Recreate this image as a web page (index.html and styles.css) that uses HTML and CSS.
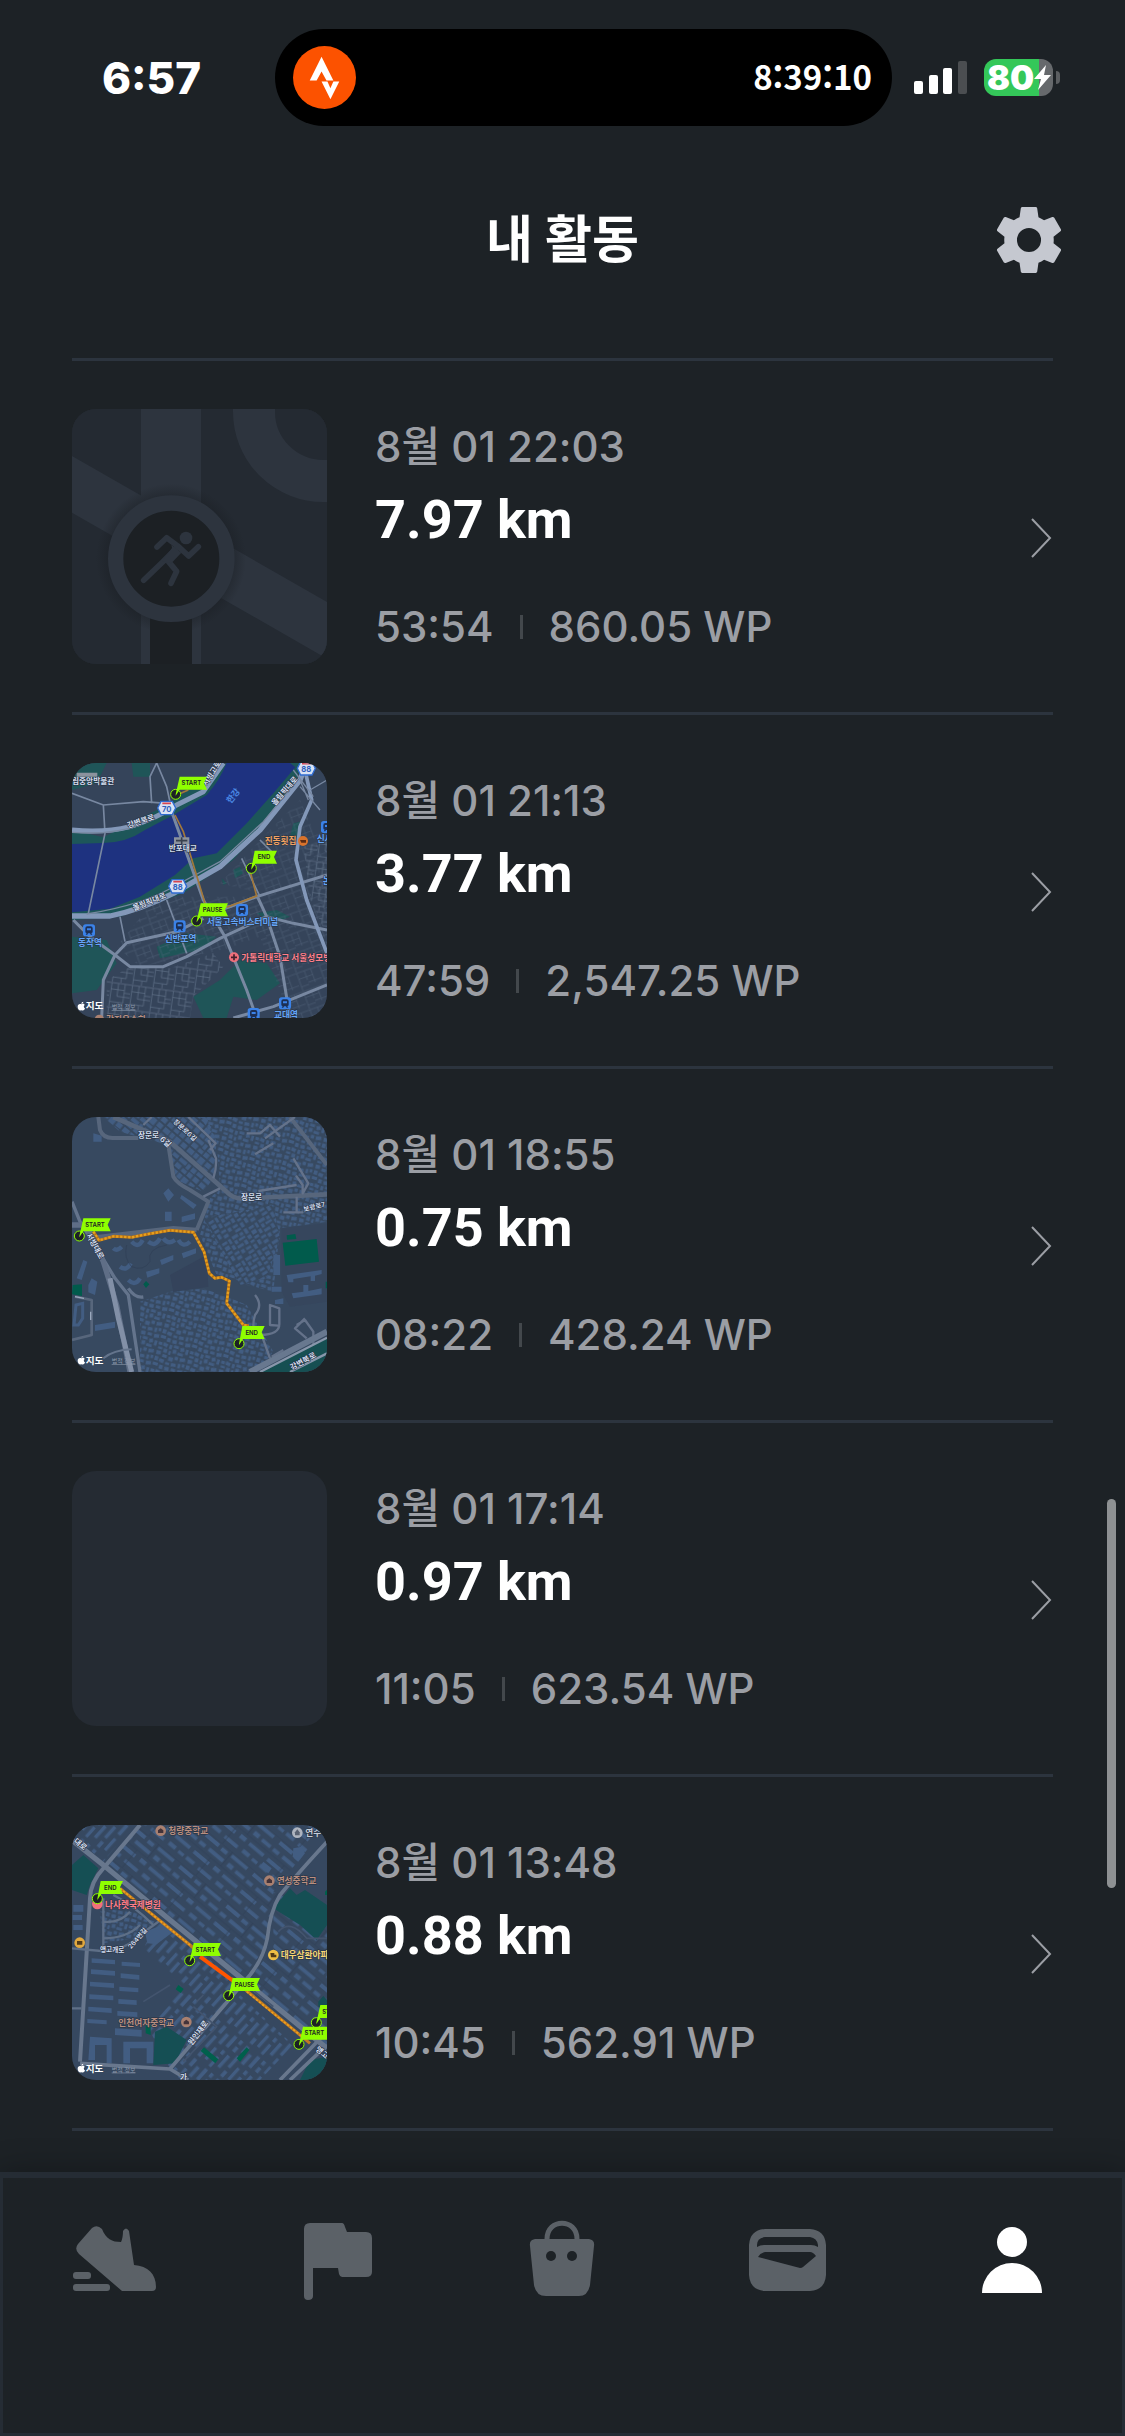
FILE: index.html
```html
<!DOCTYPE html>
<html lang="ko">
<head>
	<meta charset="UTF-8">
	<meta name="viewport" content="width=device-width, initial-scale=1">
	<title>내 활동</title>
	<link rel="stylesheet" href="styles.css">
</head>
<body>

	<!-- shared symbols for the maps -->
	<svg class="sprite" aria-hidden="true">
		<defs>
			<symbol id="flag-long" overflow="visible">
				<circle r="15" fill="#1d2125" stroke="#8fff00" stroke-width="3"/>
				<path d="M0 0L12-53H94L85-34L94-14H12L0 4Z" fill="#8fff00"/>
			</symbol>
			<symbol id="flag-short" overflow="visible">
				<circle r="15" fill="#1d2125" stroke="#8fff00" stroke-width="3"/>
				<path d="M0 0L10-53H77L68-34L77-14H12L0 4Z" fill="#8fff00"/>
			</symbol>
			<symbol id="station" overflow="visible">
				<rect x="-18" y="-18" width="36" height="36" rx="8" fill="#3b82e8"/>
				<path fill-rule="evenodd" d="M-5-12H5Q11-12 11-6V4Q11 8 7 8L10 13H5L3 9H-3L-5 13H-10L-7 8Q-11 8-11 4V-6Q-11-12-5-12ZM-6-6V0H6V-6Z" fill="#1c2f55"/>
			</symbol>
			<symbol id="shield" overflow="visible">
				<path d="M-27 0L-17-20H17L27 0L17 20H-17Z" fill="#d8e2f4" stroke="#2f6bd0" stroke-width="4"/>
				<path d="M-13-14H13" stroke="#d64550" stroke-width="5"/>
			</symbol>
			<symbol id="apple" overflow="visible">
				<path d="M0-6C4-9 9-8 10-4C6-2 7 5 11 6C9 12 6 14 0 12C-6 14-11 8-11 1C-11-6-5-9 0-6ZM0-8C0-12 3-14 6-14C6-10 3-8 0-8Z" fill="#fff"/>
			</symbol>
			<pattern id="blocks" width="98" height="84" patternUnits="userSpaceOnUse" patternTransform="rotate(17)">
				<path d="M2 3H13V12H2ZM17 1L31 4L29 14L16 11ZM36 3H44V16H36ZM49 1H64V9H49ZM69 4L80 1L83 11L72 15ZM87 3H95V19H87ZM4 17H17V24H4ZM22 19H33V31H22ZM49 14L60 13L61 25L50 26ZM65 19H82V27H65ZM2 30L16 29L17 40L4 42ZM38 22H45V33H38ZM23 36H37V45H23ZM43 38H57V50H43ZM61 32H71V43H61ZM76 33L92 30L94 40L78 44ZM3 47H14V60H3ZM19 50L33 52L31 63L17 60ZM38 56H50V64H38ZM55 55L69 53L71 62L56 65ZM76 50H84V64H76ZM88 48H96V58H88ZM2 66H18V75H2ZM23 69H34V81H23ZM39 71L52 69L54 80L41 82ZM60 70H73V78H60ZM79 70L94 67L96 77L81 81Z" fill="#425d82"/>
			</pattern>
			<pattern id="blocks-b" width="94" height="76" patternUnits="userSpaceOnUse" patternTransform="rotate(-32)">
				<path d="M2 3H19V11H2ZM24 2H32V18H24ZM38 1H58V10H38ZM63 4H74V13H63ZM80 1H90V17H80ZM3 17H18V29H3ZM38 15H48V27H38ZM53 17H74V24H53ZM23 24H33V38H23ZM2 35H17V43H2ZM38 33H58V42H38ZM63 30H73V44H63ZM79 23H91V34H79ZM79 41H92V48H79ZM3 50H13V65H3ZM19 46H35V54H19ZM40 49H51V61H40ZM57 51H73V59H57ZM19 61H34V71H19ZM57 65H75V73H57ZM80 55H90V70H80Z" fill="#425d82"/>
			</pattern>
			<pattern id="houses" width="94" height="78" patternUnits="userSpaceOnUse" patternTransform="rotate(40)">
				<path d="M3 3H24V19H3ZM28 3H42V19H28ZM46 3H66V23H46ZM72 3H90V18H72ZM3 25H19V37H3ZM23 25H41V37H23ZM47 28H67V37H47ZM73 22H90V37H73ZM3 43H29V55H3ZM33 43H44V59H33ZM50 43H66V57H50ZM71 43H91V54H71ZM3 61H22V75H3ZM28 64H45V75H28ZM50 61H66V75H50ZM72 60H90V75H72Z" fill="#425d82"/>
			</pattern>
			<pattern id="slabs" width="184" height="124" patternUnits="userSpaceOnUse" patternTransform="rotate(40)">
				<path d="M6 6H56V18H6ZM68 8H90V20H68ZM105 5H166V16H105ZM4 34H26V46H4ZM40 33H96V45H40ZM112 31H132V45H112ZM144 34H177V45H144ZM10 68H68V80H10ZM86 65H108V78H86ZM122 67H178V78H122ZM4 96H34V108H4ZM52 98H102V109H52ZM120 95H146V108H120ZM158 98H178V108H158Z" fill="#425d82"/>
				<path d="M0 56H184M0 0H184M100 0V56M60 56V124" stroke="#2e3e57" stroke-width="2"/>
			</pattern>
			<pattern id="slabs-up" width="132" height="92" patternUnits="userSpaceOnUse" patternTransform="rotate(-48)">
				<path d="M4 5H42V15H4ZM54 6H68V16H54ZM82 4H124V15H82ZM20 27H66V37H20ZM84 28H102V39H84ZM112 27H126V37H112ZM5 51H26V62H5ZM40 50H84V60H40ZM98 51H125V62H98ZM12 74H58V84H12ZM74 73H112V84H74Z" fill="#425d82"/>
			</pattern>
			<pattern id="streets" width="62" height="74" patternUnits="userSpaceOnUse" patternTransform="rotate(8)">
				<path d="M0 3H62M4 3V74M24 3V42M4 22H44M44 3V60M24 42H62M4 60H44M30 60V74M44 30H62" stroke="#617189" stroke-width="2" fill="none"/>
			</pattern>
			<pattern id="streets-b" width="72" height="58" patternUnits="userSpaceOnUse" patternTransform="rotate(-20)">
				<path d="M0 3H72M6 3V58M30 3V32M6 22H50M50 3V46M30 40H72M6 46H30" stroke="#586981" stroke-width="2" fill="none"/>
			</pattern>
		</defs>
	</svg>

	<div class="status-bar">
		<span class="clock">6:57</span>
		<div class="island">
			<svg class="island-logo" viewBox="0 0 64 64" aria-hidden="true">
				<circle cx="32" cy="32" r="32" fill="#fc5200"/>
				<path d="M29 11L41 35H34L29 26L24 35H17Z" fill="#fff"/>
				<path d="M29 36H35L38 43L41 36H47L38 54Z" fill="#fff"/>
			</svg>
			<span class="timer">8:39:10</span>
		</div>
		<svg class="signal" viewBox="0 0 53 33" aria-hidden="true">
			<rect x="0" y="20" width="9" height="13" rx="2" fill="#fff"/>
			<rect x="15" y="14" width="9" height="19" rx="2" fill="#fff"/>
			<rect x="29" y="7" width="9" height="26" rx="2" fill="#fff"/>
			<rect x="44" y="0" width="9" height="33" rx="2" fill="#4b4e51"/>
		</svg>
		<div class="battery">
			<span>80</span>
			<svg class="bolt" viewBox="0 0 17 25" aria-hidden="true"><path d="M12 0L0 14H7L4 25L17 10H10Z" fill="#fff"/></svg>
		</div>
	</div>

	<header class="header">
		<h1 class="title">내 활동</h1>
		<button class="settings" type="button" aria-label="설정">
			<svg viewBox="2 2 20 20"><path fill="#c5c8d0" d="M19.430 12.980c.04-.32.070-.64.070-.98s-.03-.66-.070-.98l2.110-1.650c.19-.15.240-.42.120-.64l-2-3.460c-.12-.22-.39-.3-.61-.22l-2.490 1c-.52-.4-1.080-.73-1.690-.98l-.38-2.650C14.460 2.180 14.250 2 14 2h-4c-.25 0-.46.180-.49.420l-.38 2.650c-.61.250-1.170.590-1.690.980l-2.490-1c-.23-.09-.49 0-.61.220l-2 3.460c-.13.220-.07.490.12.640l2.110 1.650c-.04.320-.07.650-.07.980s.03.660.070.980l-2.110 1.650c-.19.150-.24.420-.12.640l2 3.460c.12.220.39.300.61.220l2.490-1c.52.400 1.080.730 1.690.980l.38 2.650c.03.240.24.420.49.420h4c.25 0 .46-.18.490-.42l.38-2.650c.61-.25 1.170-.59 1.690-.98l2.490 1c.23.090.49 0 .61-.22l2-3.460c.12-.22.070-.49-.12-.64l-2.110-1.650zM12 15.650a3.650 3.650 0 1 1 0-7.300a3.650 3.650 0 0 1 0 7.300z"/></svg>
		</button>
	</header>

	<main class="content">
		<ul class="activities">
			<li>
				<a class="activity" href="#">
					<svg class="thumb" viewBox="36 27 765 765" aria-hidden="true">
						<defs><radialGradient id="ring-shadow"><stop offset=".8" stop-color="#191d22"/><stop offset="1" stop-color="#191d22" stop-opacity="0"/></radialGradient></defs>
						<rect x="36" y="27" width="765" height="765" fill="#242a32"/>
						<path d="M243 27H423V792H243ZM36 168L801 606V776L36 338Z" fill="#2d343e"/>
						<circle cx="790" cy="35" r="208" fill="none" stroke="#2d343e" stroke-width="126"/>
						<circle cx="333" cy="476" r="225" fill="url(#ring-shadow)" opacity=".5"/>
						<path d="M270 630H396V792H270Z" fill="#1c2024"/>
						<circle cx="334" cy="476" r="167" fill="#1c2024" stroke="#2d343e" stroke-width="46"/>
						<circle cx="378" cy="414" r="19" fill="#2d343e"/>
						<path d="M291 441L320 413L352 437L386 468L415 440M352 442L308 486L251 541M325 484L350 514L333 550" fill="none" stroke="#2d343e" stroke-width="17" stroke-linecap="round" stroke-linejoin="round"/>
						<path d="M334 434L364 458L334 490L306 484L336 444Z" fill="#2d343e"/>
					</svg>
					<div class="info">
						<span class="date">8월 01 22:03</span>
						<strong class="distance">7.97 km</strong>
						<div class="meta"><span>53:54</span><i class="sep"></i><span>860.05 WP</span></div>
					</div>
					<svg class="chevron" viewBox="0 -1 22 40" aria-hidden="true"><path d="M1 1L19 20L1 39"/></svg>
				</a>
			</li>
			<li>
				<a class="activity" href="#">
					<svg class="thumb" viewBox="36 39 765 765" aria-hidden="true">
						<rect x="36" y="39" width="765" height="765" fill="#35445a"/>
						<!-- parks -->
						<path d="M36 39H140L110 100L36 120ZM215 39H270V80H220ZM36 560L140 570L170 640L110 720L36 730ZM290 590L380 550L470 560L420 600L300 625ZM400 740L480 690L540 630L620 640L660 700L590 750L520 740L500 804H430ZM590 490L650 480L690 500L640 520ZM485 385L500 400L490 405ZM520 360L540 350L550 370L525 385ZM700 220L720 215L715 280L690 260Z" fill="#1f5558"/>
						<path d="M36 240L130 262L330 160L470 60L500 39H725L700 120L520 330L370 430L180 500L36 510Z" fill="#1d5659"/>
						<!-- river -->
						<path d="M36 282L130 279Q200 278 255 240L340 195L440 135Q480 90 500 39H690L706 52L640 130L560 220L470 310L400 325L345 375L240 440L150 476L36 487Z" fill="#1e3280"/>
						<path d="M290 440L580 440L720 390L801 380V804H690L600 560L490 600L240 650L170 590Z" fill="url(#streets-b)" opacity=".6"/>
						<path d="M210 650L330 655L460 610L490 650L400 740L390 804H140V690Z" fill="url(#streets)"/>
						<path d="M480 400L600 270L720 150L760 240L801 260V390L600 430Z" fill="url(#streets-b)" opacity=".5"/>
						<path d="M730 290L801 270V560L750 440Z" fill="url(#streets)"/>
						<g fill="none" stroke="#7888a1" stroke-linejoin="round">
							<path d="M36 130L130 165L250 155L320 160M130 165L135 250L85 490M275 160L270 80L290 39M290 39L320 110L335 180M180 500L195 575M320 450L380 610M545 325L600 440M600 270L640 310M585 440L490 480" stroke-width="5"/>
							<path d="M335 185L430 450L495 560L560 720L590 804M590 435L620 500L660 620L690 804M430 470L510 470L590 440L801 375M40 510L90 560L165 615L210 650L310 650L380 620L480 565L620 500L700 520L801 540M165 615L130 690L125 804M165 615L200 578L350 545L430 505M520 804L640 770L801 705" stroke-width="9"/>
							<path d="M36 240Q130 250 210 230Q290 205 350 165L430 125L490 39" stroke="#8398b9" stroke-width="15"/>
							<path d="M36 498H150Q240 480 340 430L480 350L600 240L720 90L740 39" stroke="#8398b9" stroke-width="16"/>
							<path d="M735 60L755 150L720 230L708 330L740 450L801 610" stroke="#8398b9" stroke-width="11"/>
							<path d="M36 247Q150 256 240 226M80 492Q250 465 350 405L480 335L610 215L705 100M700 60L760 140M720 110L780 180M801 90L750 120M745 150L720 90" stroke-width="4"/>
						</g>
						<path d="M345 195L370 245L435 460M500 472L590 438L572 370M352 134L385 120" fill="none" stroke="#a2783a" stroke-width="5"/>
						<g class="map-label road">
							<text x="205" y="235" transform="rotate(-19 205 235)">강변북로</text>
							<text x="440" y="110" transform="rotate(-58 440 110)">서빙고로</text>
							<text x="222" y="482" transform="rotate(-22 222 482)">올림픽대로</text>
							<text x="645" y="168" transform="rotate(-49 645 168)">올림픽대로</text>
							<text x="326" y="304">반포대교</text>
							<text x="36" y="102">립중앙박물관</text>
						</g>
						<path d="M342 262H388V282H342ZM50 68H112V80H50Z" fill="#8b929d"/>
						<path d="M348 272H382M365 262V282" stroke="#39414e" stroke-width="5"/>
						<text class="map-label water" x="512" y="162" transform="rotate(-52 512 162)">한강</text>
						<use href="#shield" x="320" y="174"/><use href="#shield" x="353" y="409"/><use href="#shield" x="739" y="55"/>
						<g class="shield-no"><text x="320" y="186">70</text><text x="353" y="419">88</text><text x="739" y="65">88</text></g>
						<use href="#station" x="87" y="541"/><use href="#station" x="359" y="529"/><use href="#station" x="546" y="480"/><use href="#station" x="675" y="760"/><use href="#station" x="581" y="792"/><use href="#station" x="801" y="231"/>
						<g class="map-label transit">
							<text x="54" y="588">동작역</text><text x="314" y="575">신반포역</text>
							<text x="440" y="526">서울고속버스터미널</text><text x="642" y="804">교대역</text>
							<text x="770" y="276">신사</text><text x="788" y="403">논</text>
						</g>
						<text class="map-label food" x="614" y="282">진동횟집</text>
						<circle cx="729" cy="273" r="15" fill="#d9732c"/><path d="M720 270H738V278H724Z" fill="#5b2c14"/>
						<circle cx="522" cy="622" r="15" fill="#f0707c"/><path d="M522 613V631M513 622H531" stroke="#43202c" stroke-width="5"/>
						<text class="map-label hospital" x="544" y="632">가톨릭대학교 서울성모병</text>
						<circle cx="118" cy="808" r="14" fill="#a98070"/>
						<text class="map-label school" x="138" y="818">강진우수회</text>
						<use href="#flag-long" x="347" y="133"/><use href="#flag-short" x="574" y="355"/><use href="#flag-long" x="410" y="513"/>
						<g class="flag-text"><text x="394" y="105">START</text><text x="612" y="327">END</text><text x="458" y="486">PAUSE</text></g>
						<use href="#apple" x="64" y="769"/>
						<text class="map-brand" x="77" y="778">지도</text><text class="map-legal" x="155" y="778">법적 정보</text>
					</svg>
					<div class="info">
						<span class="date">8월 01 21:13</span>
						<strong class="distance">3.77 km</strong>
						<div class="meta"><span>47:59</span><i class="sep"></i><span>2,547.25 WP</span></div>
					</div>
					<svg class="chevron" viewBox="0 -1 22 40" aria-hidden="true"><path d="M1 1L19 20L1 39"/></svg>
				</a>
			</li>
			<li>
				<a class="activity" href="#">
					<svg class="thumb" viewBox="36 36 765 765" aria-hidden="true">
						<rect x="36" y="36" width="765" height="765" fill="#374960"/>
						<path d="M130 36H440L470 110L460 220L430 260L350 225L325 120L180 80Z" fill="url(#houses)"/>
						<path d="M420 36H801V350L660 370L640 560L560 540L520 520L470 510L420 390L450 280L480 250L470 110Z" fill="url(#blocks)"/>
						<path d="M240 590L330 560L440 550L560 600L640 740L590 801H240Z" fill="url(#blocks)"/>
						<path d="M430 340L640 300L660 400L620 520L540 540Z" fill="#374960"/>
						<path d="M430 340L640 300L660 400L620 520L540 540Z" fill="url(#blocks-b)"/>
						<path d="M310 265L325 250L342 270L325 290ZM315 320H335V348H315ZM365 270L410 300L400 312L360 280ZM365 335L405 325V342L365 352ZM300 465L340 450V465L305 480ZM365 445L408 430V445L370 460ZM258 500L298 490V505L262 518ZM100 85L125 92V110H100ZM85 540L95 520L112 530L105 570L85 562ZM50 520L70 465L82 470L65 525ZM105 660L165 650V668L105 678ZM640 450H660V510H640ZM635 545H665V560H635ZM645 585L670 580V597H645Z" fill="#425d82"/>
						<path d="M160 430Q170 440 185 425M215 410Q235 432 248 405M265 410Q285 428 300 400M310 400Q325 420 345 405M355 405Q370 430 390 410M180 485Q200 500 212 475M205 525Q225 545 240 520" fill="none" stroke="#425d82" stroke-width="13"/>
						<path d="M200 420Q190 460 215 485Q250 500 270 470Q260 430 320 420" fill="none" stroke="#304056" stroke-width="2"/>
						<path d="M330 510L440 450L445 545L340 560Z" fill="#34435b"/>
						<path d="M665 370L801 355V590L690 605L665 560Z" fill="#35455c" opacity=".6"/>
						<path d="M668 413L770 402L777 470L676 482ZM680 391L706 387L709 402L681 404ZM38 540L66 538V573L36 568ZM250 538L258 528L268 538L258 549ZM797 530H801V550H797Z" fill="#015b4c"/>
						<path d="M680 510L785 495V507L765 512V528H752V514L700 522V532H685ZM695 565L730 560V540H745V558L785 550V568L700 580Z" fill="#425d82"/>
						<g fill="none" stroke="#57667c" stroke-linejoin="round">
							<path d="M160 36L330 110L500 260Q520 285 560 280L801 268" stroke-width="14"/>
							<path d="M115 36L120 75Q130 100 160 99H235M325 120L340 215Q350 235 390 255L445 290L410 375M690 36L801 180" stroke-width="12"/>
							<path d="M105 398L340 370L410 375" stroke-width="14"/>
							<path d="M385 36L467 115L450 135M445 105L468 160Q470 190 460 220M250 60L275 36M430 275L480 250M560 85H600L630 60L660 95M585 148L640 115M615 100L705 36M700 160L745 235L728 265V240L708 212M595 258L710 240M670 322H730M710 275V320M585 570Q610 600 585 630Q570 680 600 690Q660 690 658 655V610L630 600V660L655 662M710 660L735 645L760 680V740M605 690L630 760M735 640L705 670L740 700M635 755L670 735" stroke="#64728a" stroke-width="7"/>
							<path d="M36 290L60 350L110 430L165 520L205 570L240 801M205 550Q225 580 250 576" stroke="#64748c" stroke-width="10"/>
							<path d="M36 360H80L130 470L170 600L210 801" stroke="#5f6e86" stroke-width="16"/>
							<path d="M150 520L175 640L215 801" stroke="#8290a7" stroke-width="15"/>
							<path d="M36 705L95 690V585L45 575" stroke="#57667c" stroke-width="8"/>
							<path d="M130 760Q160 735 215 733" stroke="#64748c" stroke-width="6"/>
						</g>
						<path d="M48 600L68 595V640L55 660H42Z" fill="none" stroke="#425d82" stroke-width="9"/>
						<path d="M45 575L72 580M92 620V645" stroke="#9aa8bd" stroke-width="4"/>
						<path d="M600 801L801 700V801Z" fill="#164f52"/>
						<path d="M570 801L801 680" stroke="#68788f" stroke-width="18"/>
						<path d="M600 801L801 698M690 801L801 745" stroke="#8896ab" stroke-width="7"/>
						<path d="M100 380L117 406L160 394L215 397L270 386L330 376L400 382L432 440L448 505L465 520L485 517L508 528L500 595L550 660L566 662" fill="none" stroke="#b97519" stroke-width="9" stroke-linejoin="round"/>
						<path d="M100 380L117 406L160 394L215 397L270 386L330 376L400 382L432 440L448 505L465 520L485 517L508 528L500 595L550 660L566 662" fill="none" stroke="#e8a01c" stroke-width="7" stroke-dasharray="7 5"/>
						<g class="map-label road">
							<text x="234" y="99">장문로</text><text x="298" y="104" transform="rotate(42 298 104)">6길</text>
							<text class="small" x="338" y="52" transform="rotate(42 338 52)">장문로6길</text>
							<text x="543" y="286">장문로</text>
							<text class="small" x="732" y="320" transform="rotate(-14 732 320)">보광로7</text>
							<text x="78" y="390" transform="rotate(61 78 390)">서빙대로</text>
							<text x="696" y="796" transform="rotate(-29 696 796)">강변북로</text>
						</g>
						<use href="#flag-long" x="58" y="393"/><use href="#flag-short" x="537" y="716"/>
						<g class="flag-text"><text x="105" y="365">START</text><text x="575" y="689">END</text></g>
						<use href="#apple" x="64" y="766"/>
						<text class="map-brand" x="77" y="776">지도</text><text class="map-legal" x="155" y="775">법적 정보</text>
					</svg>
					<div class="info">
						<span class="date">8월 01 18:55</span>
						<strong class="distance">0.75 km</strong>
						<div class="meta"><span>08:22</span><i class="sep"></i><span>428.24 WP</span></div>
					</div>
					<svg class="chevron" viewBox="0 -1 22 40" aria-hidden="true"><path d="M1 1L19 20L1 39"/></svg>
				</a>
			</li>
			<li>
				<a class="activity" href="#">
					<div class="thumb"></div>
					<div class="info">
						<span class="date">8월 01 17:14</span>
						<strong class="distance">0.97 km</strong>
						<div class="meta"><span>11:05</span><i class="sep"></i><span>623.54 WP</span></div>
					</div>
					<svg class="chevron" viewBox="0 -1 22 40" aria-hidden="true"><path d="M1 1L19 20L1 39"/></svg>
				</a>
			</li>
			<li>
				<a class="activity" href="#">
					<svg class="thumb" viewBox="36 30 765 765" aria-hidden="true">
						<rect x="36" y="30" width="765" height="765" fill="#364860"/>
						<path d="M240 30H801L640 230L620 390L560 490L140 160Z" fill="url(#slabs)"/>
						<path d="M560 500L640 400V230L801 260V700Z" fill="url(#slabs)"/>
						<path d="M300 310L540 510L330 760L260 630L370 520L250 400Z" fill="url(#slabs-up)"/>
						<path d="M540 540L700 690L600 795H360L340 760Z" fill="url(#slabs-up)"/>
						<path d="M60 30H220L130 140L50 70Z" fill="url(#slabs-up)"/>
						<path d="M40 270H70V290H40ZM38 300H66V315H38ZM40 330H68V345H40ZM95 430L165 435V448L95 443ZM93 463L165 468V482L93 477ZM90 500L162 505V519L90 514ZM88 538L160 542V556L88 552ZM85 575L155 580V594L85 589ZM185 440L240 444V456L185 452ZM182 475L238 480V494L182 489ZM178 515L235 519V532L178 528ZM175 552L230 556V570L175 566ZM172 588L232 592V606L172 602ZM82 612L140 616V628L82 624ZM165 640L245 645V665L165 660Z" fill="#425d82"/>
						<path d="M90 665L155 670V745H140V690H105V735H85ZM190 680H280V745H260V700H210V745H190ZM700 100L725 95L735 115L715 140L698 125ZM610 140L635 160L625 175L600 155ZM255 350L320 325L340 350L290 388L262 385Z" fill="#425d82"/>
						<path d="M120 290L200 280L285 320L230 370L130 385Z" fill="url(#blocks)"/>
						<path d="M70 120L115 160L90 210L80 240L36 225V150ZM640 280L690 220L710 240L735 225L801 270V330L770 375L720 330ZM285 650L320 635L380 675L345 745L280 750ZM720 795L750 735L801 725V795ZM775 560L790 543L801 555V575H775Z" fill="#154f54"/>
						<path d="M257 630H272V660L257 655ZM355 510L371 522L362 534L347 523ZM422 708L432 697L475 733L466 745ZM530 730L560 697L568 705L540 740ZM795 230L801 224V240H795Z" fill="#00604c"/>
						<g fill="none" stroke="#68778d" stroke-linejoin="round">
							<path d="M36 75L130 150L330 315L801 700" stroke-width="16"/>
							<path d="M240 30L130 160Q92 200 90 250L60 740" stroke-width="12"/>
							<path d="M801 80Q700 190 660 240Q630 290 622 370Q610 430 570 480L330 762L385 795M60 745L330 762M660 795L801 650M690 795L801 690" stroke-width="11"/>
							<path d="M36 580H65M36 400L125 408Q200 405 240 360L298 318M130 250V400M130 320Q180 325 210 290M130 370Q200 370 240 330M160 240Q220 270 280 330" stroke="#5e6f87" stroke-width="7"/>
							<path d="M655 350Q690 310 740 370L801 370M410 560L430 540M250 560L330 510M400 575L470 635L370 740M560 510L640 575" stroke="#43546e" stroke-width="5"/>
						</g>
						<path d="M180 220L390 390L430 425M515 490L750 685" fill="none" stroke="#bf7a22" stroke-width="9"/>
						<path d="M180 220L390 390M560 530L730 668" fill="none" stroke="#f0a01c" stroke-width="5" stroke-dasharray="7 5"/>
						<path d="M420 425L520 498" stroke="#ff5500" stroke-width="12"/>
						<g class="map-label road">
							<text x="40" y="80" transform="rotate(40 40 80)">대로</text>
							<text class="small" x="120" y="410">앵고개로</text>
							<text class="small" x="213" y="403" transform="rotate(-49 213 403)">264번길</text>
							<text x="395" y="692" transform="rotate(-53 395 692)">원인재로</text>
							<text x="765" y="705" transform="rotate(40 765 705)">앵고</text><text x="360" y="795">가</text>
						</g>
						<g fill="#a98070"><circle cx="302" cy="47" r="16"/><circle cx="628" cy="197" r="16"/><circle cx="379" cy="621" r="16"/></g>
						<path d="M294 54V46L302 40L310 46V54ZM620 204V196L628 190L636 196V204ZM371 628V620L379 614L387 620V628Z" fill="#43333a"/>
						<circle cx="712" cy="53" r="16" fill="#aeb4bf"/><path d="M705 61V52L712 43L719 52V61Z" fill="#596272"/>
						<circle cx="59" cy="383" r="16" fill="#e1a83e"/><circle cx="640" cy="420" r="16" fill="#f0bf45"/>
						<path d="M51 378H67V389H51ZM631 414H643V419H649V427H633Z" fill="#523b18"/>
						<circle cx="112" cy="267" r="16" fill="#f0707c"/>
						<g class="map-label school"><text x="325" y="58">청량중학교</text><text x="650" y="207">연성중학교</text><text x="175" y="632">인천여자중학교</text></g>
						<text class="map-label plain" x="736" y="63">연수</text>
						<text class="map-label hospital" x="135" y="279">나사렛국제병원</text>
						<text class="map-label shop" x="662" y="430">대우삼환아파</text>
						<use href="#flag-short" x="112" y="251"/><use href="#flag-long" x="389" y="437"/><use href="#flag-long" x="506" y="542"/><use href="#flag-long" x="769" y="623"/><use href="#flag-long" x="717" y="688"/>
						<g class="flag-text"><text x="151" y="224">END</text><text x="436" y="411">START</text><text x="554" y="515">PAUSE</text><text x="816" y="597">START</text><text x="763" y="660">START</text></g>
						<use href="#apple" x="64" y="760"/>
						<text class="map-brand" x="77" y="770">지도</text><text class="map-legal" x="155" y="770">법적 정보</text>
					</svg>
					<div class="info">
						<span class="date">8월 01 13:48</span>
						<strong class="distance">0.88 km</strong>
						<div class="meta"><span>10:45</span><i class="sep"></i><span>562.91 WP</span></div>
					</div>
					<svg class="chevron" viewBox="0 -1 22 40" aria-hidden="true"><path d="M1 1L19 20L1 39"/></svg>
				</a>
			</li>
		</ul>
		<div class="scroll-thumb"></div>
	</main>

	<nav class="tab-bar">
		<a href="#" aria-label="운동">
			<svg viewBox="0 0 90 90"><path d="M10 30L24 14Q29 10 34 15C38 25 44 28 53 28Q55 24 55 17Q58 12 61 17L66 51C80 52 88 60 88 73Q88 77 84 77H54L11 40Q6 35 10 30Z"/><rect x="5" y="58" width="18" height="7" rx="3"/><rect x="5" y="70" width="37" height="7" rx="3"/></svg>
		</a>
		<a href="#" aria-label="챌린지">
			<svg viewBox="0 0 90 90"><path d="M11 15Q11 9 17 9H49Q51 9 52 13L54 18H73Q79 18 79 24V58Q79 63 73 63H49Q47 63 46 60L45 54H20V82Q20 86 15 86Q11 86 11 82Z"/></svg>
		</a>
		<a href="#" aria-label="상점">
			<svg viewBox="0 0 90 90"><path d="M29 28V25C29 4 59 4 59 25V28" fill="none" stroke="#5b6167" stroke-width="5"/><path d="M17 25H71Q77 26 76 32L72 71Q70 82 61 82H28Q18 82 16 71L12 32Q11 26 17 25Z"/><circle cx="33" cy="42" r="5" fill="#1d2226"/><circle cx="54" cy="42" r="5" fill="#1d2226"/></svg>
		</a>
		<a href="#" aria-label="지갑">
			<svg viewBox="0 0 90 90"><path fill-rule="evenodd" d="M22 15H67Q82 16 83 31V61Q82 76 67 77H22Q7 76 6 61V31Q7 16 22 15ZM14 33Q17 31 21 31H68Q72 31 75 33V31Q74 24 67 23H22Q14 24 14 31ZM15 43L57 54Q59 54 60 53L73 42Q70 38 67 38H22Q17 39 15 43Z"/></svg>
		</a>
		<a class="active" href="#" aria-label="내 활동" aria-current="page">
			<svg viewBox="0 0 90 90"><circle cx="44" cy="28" r="15"/><path d="M14 79A30 30 0 0 1 74 79Z"/></svg>
		</a>
	</nav>

</body>
</html>
```

FILE: styles.css
```css
*{
	box-sizing: border-box;
}
body{
	margin: 0;
	min-height: 100vh;
	display: flex;
	flex-direction: column;
	background-color: #1d2226;
	color: #fff;
	font-family: Inter, "Noto Sans CJK KR", sans-serif;
}
a{
	color: inherit;
	text-decoration: none;
}
.sprite{
	position: absolute;
	width: 0;
	height: 0;
}

/*status bar*/
.status-bar{
	display: flex;
	align-items: center;
	height: 155px;
	padding: 0 72px 0 102px;
}
.clock{
	flex: 1;
	font-size: 44px;
	font-weight: 800;
	line-height: 54px;
}
.island{
	display: flex;
	align-items: center;
	justify-content: space-between;
	width: 617px;
	height: 97px;
	padding: 0 20px 0 18px;
	border-radius: 49px;
	background-color: #000;
}
.island-logo{
	width: 63px;
	height: 63px;
}
.timer{
	font-family: "Noto Sans CJK KR", sans-serif;
	font-size: 33px;
	font-weight: 700;
	line-height: 44px;
	padding-bottom: 3px;
}
.signal{
	width: 53px;
	height: 33px;
	margin: 0 17px 0 22px;
}
.battery{
	position: relative;
	display: flex;
	align-items: center;
	width: 69px;
	height: 37px;
	padding-left: 3px;
	border-radius: 12px;
	background: linear-gradient(to right, #34c759 80%, #66696c 80%);
	font-size: 34px;
	font-weight: 900;
	line-height: 37px;
}
.battery::after{
	content: "";
	position: absolute;
	right: -7px;
	top: 12px;
	width: 4px;
	height: 13px;
	border-radius: 0 4px 4px 0;
	background-color: #5b5e61;
}
.bolt{
	flex: none;
	width: 17px;
	height: 25px;
}

/*header*/
.header{
	display: grid;
	grid-template-columns: 1fr auto 1fr;
	align-items: center;
	height: 170px;
	padding: 0 63px;
}
.title{
	grid-column: 2;
	margin: 0;
	font-size: 51px;
	font-weight: 700;
	line-height: 62px;
}
.settings{
	justify-self: end;
	width: 66px;
	height: 66px;
	padding: 0;
	border: 0;
	background: none;
}
.settings svg{
	display: block;
}

/*activity list*/
.content{
	position: relative;
	flex: 1;
	padding: 33px 72px 41px;
}
.activities{
	margin: 0;
	padding: 0;
	list-style: none;
	border-top: 3px solid #2c343e;
}
.activities li{
	border-bottom: 3px solid #2c343e;
}
.activity{
	display: flex;
	align-items: center;
	gap: 48px;
	padding: 48px 0;
}
.thumb{
	flex: none;
	width: 255px;
	height: 255px;
	border-radius: 24px;
	background-color: #252b33;
	overflow: hidden;
}
.info{
	flex: 1;
	color: #9b9ea4;
	font-size: 42px;
	font-weight: 500;
	line-height: 50px;
}
.date{
	display: block;
}
.distance{
	display: block;
	margin: 16px 0 50px;
	color: #fff;
	font-family: Roboto, sans-serif;
	font-size: 54px;
	font-weight: 700;
	line-height: 64px;
}
.meta{
	display: flex;
	align-items: center;
	gap: 26px;
}
.sep{
	width: 3px;
	height: 24px;
	background-color: #43484c;
}
.chevron{
	width: 22px;
	height: 40px;
	overflow: visible;
	fill: none;
	stroke: #9b9ea4;
	stroke-width: 2;
}
.scroll-thumb{
	position: absolute;
	right: 9px;
	bottom: 284px;
	width: 9px;
	height: 389px;
	border-radius: 5px;
	background-color: #8e9193;
}

/*maps*/
.map-label{
	font-size: 26px;
	font-weight: 600;
	stroke: #26303f;
	stroke-width: 3px;
	paint-order: stroke;
}
.road{ fill: #d3deef; font-size: 23px; }
.road .small{ font-size: 20px; }
.water{ fill: #4c8ae6; stroke: none; }
.transit{ fill: #64a5f8; }
.food{ fill: #f0a263; }
.hospital{ fill: #ff7f8a; }
.school{ fill: #b98f80; }
.shop{ fill: #f7d777; }
.plain{ fill: #c8ced8; }
.shield-no{
	fill: #2f60bd;
	font-size: 23px;
	font-weight: 700;
	text-anchor: middle;
}
.flag-text{
	fill: #1d2125;
	font-size: 18px;
	font-weight: 600;
	text-anchor: middle;
}
.map-brand{
	fill: #fff;
	font-size: 29px;
	font-weight: 600;
}
.map-legal{
	fill: #8b98ab;
	font-size: 18px;
	text-decoration: underline;
}

/*bottom tabs*/
.tab-bar{
	display: grid;
	grid-template-columns: repeat(5, 1fr);
	justify-items: center;
	align-items: start;
	height: 264px;
	padding-top: 39px;
	border-top: 3px solid #252c34;
	background-color: #1d2226;
	box-shadow: inset 0 0 0 3px #252c34, 0 0 30px rgba(0, 0, 0, .3);
}
.tab-bar svg{
	display: block;
	width: 90px;
	height: 90px;
	fill: #5b6167;
}
.tab-bar .active svg{
	fill: #fff;
}
```
